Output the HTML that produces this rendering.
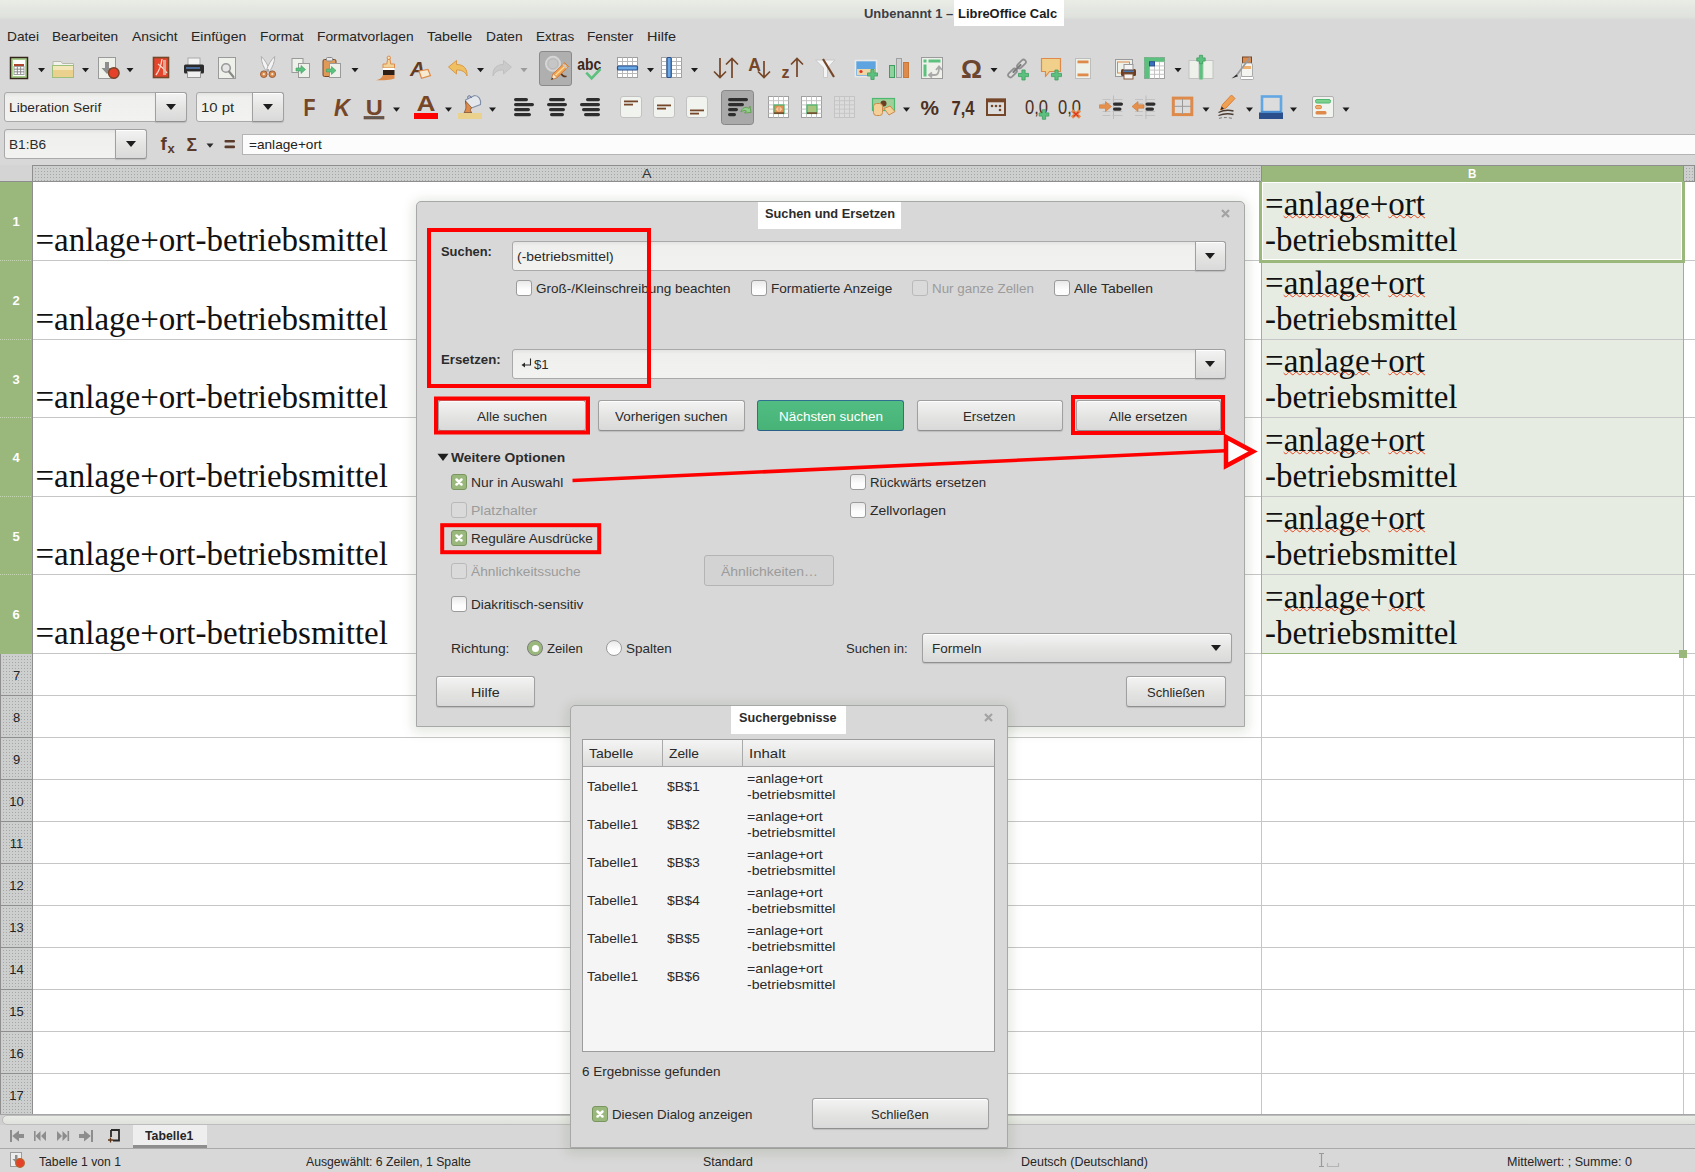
<!DOCTYPE html>
<html lang="de">
<head>
<meta charset="utf-8">
<title>Unbenannt 1 – LibreOffice Calc</title>
<style>
*{box-sizing:border-box;margin:0;padding:0}
html,body{width:1695px;height:1172px;overflow:hidden}
body{position:relative;background:#d8d8d8;font-family:"Liberation Sans",sans-serif;font-size:13.5px;color:#2b2b2b}
.abs{position:absolute}
.t{position:absolute;white-space:nowrap;line-height:16px}
.b{font-weight:bold}
/* title */
#title{left:0;top:0;width:1695px;height:21px;background:linear-gradient(#e9ede6 0,#dfe2dd 17px,#d8d8d8 20px)}
/* widgets */
.entry{position:absolute;background:linear-gradient(#e3e3e3,#eff0ed 4px,#f2f3f0);border:1px solid #a9a9a9;border-radius:3px}
.btn{position:absolute;background:linear-gradient(#f3f3f3,#e3e4e2 55%,#d9d9d9);border:1px solid #a0a0a0;border-bottom-color:#8f8f8f;border-radius:3px;box-shadow:0 1px 1px rgba(0,0,0,.13),inset 0 1px 0 rgba(255,255,255,.85);text-align:center;line-height:16px}
.btn span{position:absolute;left:0;right:0;text-align:center}
.cb{position:absolute;width:16px;height:16px;border:1px solid #9b9b9b;border-radius:3px;background:linear-gradient(#e9e9e9,#fdfdfd 60%)}
.cb.dis{background:#dadada;border-color:#b9b9b9}
.cb.on{background:#9ab87c;border-color:#7a9660}
.rb{position:absolute;width:16px;height:16px;border:1px solid #9b9b9b;border-radius:50%;background:linear-gradient(#e9e9e9,#fdfdfd 60%)}
.dis{color:#9a9a9a}
.arr{position:absolute;width:0;height:0;border-left:5px solid transparent;border-right:5px solid transparent;border-top:6px solid #1d1d1d}
.sarr{position:absolute;width:0;height:0;border-left:3.5px solid transparent;border-right:3.5px solid transparent;border-top:4px solid #2b2b2b}
/* sheet */
#sheet{left:0;top:165px;width:1695px;height:950px;background:#fff;overflow:hidden}
.hl{position:absolute;left:33px;width:1662px;height:1px;background:#c6c6c6}
.vl{position:absolute;top:16px;width:1px;height:934px;background:#c6c6c6}
.rh{position:absolute;left:0;width:32px;text-align:center;font-size:13px}
.rh.sel{background:#9ab87c;color:#fff;font-weight:bold}
.rh.un{background:#cdcfce radial-gradient(circle,#a6a6a6 .55px,transparent .9px) 1px 1px/3px 3px;border-bottom:1px solid #8e8e8e;border-left:1px solid #8e8e8e;color:#222}
.dots{background:#cdcfce radial-gradient(circle,#a6a6a6 .55px,transparent .9px) 1px 1px/3px 3px}
.cellA{position:absolute;left:35.5px;font-family:"Liberation Serif",serif;font-size:33px;line-height:36px;color:#111;white-space:nowrap}
.cellB{position:absolute;left:1265px;font-family:"Liberation Serif",serif;font-size:33px;line-height:36px;color:#111;white-space:nowrap}
.sq{text-decoration:underline wavy #e8421c 1.3px;text-underline-offset:-0.5px;text-decoration-skip-ink:none}
.dlg{position:absolute;background:#d8d8d8;border:1px solid #a8a8a8;border-radius:5px 5px 0 0;box-shadow:0 2px 12px 3px rgba(70,95,50,.15)}
</style>
</head>
<body>
<div id="title" class="abs" style="left:0px;top:0px;width:1695px;height:21px;"></div><div class="abs" style="left:954px;top:0px;width:110px;height:26px;background:#fff"></div><div class="t" style="left:864.2px;top:5.5px;font-size:13.4px;font-weight:bold;color:#3d3d45;transform:scaleX(0.9672);transform-origin:0 0;">Unbenannt 1 –</div><div class="t" style="left:958.1px;top:5.5px;font-size:13.4px;font-weight:bold;color:#1c1c1c;transform:scaleX(0.9653);transform-origin:0 0;">LibreOffice Calc</div>
<div class="t" style="left:6.6px;top:28.5px;font-size:13.6px;color:#252525;transform:scaleX(1.0079);transform-origin:0 0;">Datei</div><div class="t" style="left:51.8px;top:28.5px;font-size:13.6px;color:#252525;transform:scaleX(1.0063);transform-origin:0 0;">Bearbeiten</div><div class="t" style="left:131.5px;top:28.5px;font-size:13.6px;color:#252525;transform:scaleX(1.0224);transform-origin:0 0;">Ansicht</div><div class="t" style="left:190.6px;top:28.5px;font-size:13.6px;color:#252525;transform:scaleX(1.0281);transform-origin:0 0;">Einfügen</div><div class="t" style="left:259.9px;top:28.5px;font-size:13.6px;color:#252525;transform:scaleX(1.0146);transform-origin:0 0;">Format</div><div class="t" style="left:317.1px;top:28.5px;font-size:13.6px;color:#252525;transform:scaleX(1.0153);transform-origin:0 0;">Formatvorlagen</div><div class="t" style="left:427.4px;top:28.5px;font-size:13.6px;color:#252525;transform:scaleX(1.0487);transform-origin:0 0;">Tabelle</div><div class="t" style="left:485.6px;top:28.5px;font-size:13.6px;color:#252525;transform:scaleX(1.0085);transform-origin:0 0;">Daten</div><div class="t" style="left:535.6px;top:28.5px;font-size:13.6px;color:#252525;transform:scaleX(0.9911);transform-origin:0 0;">Extras</div><div class="t" style="left:587.4px;top:28.5px;font-size:13.6px;color:#252525;transform:scaleX(1.0020);transform-origin:0 0;">Fenster</div><div class="t" style="left:646.6px;top:28.5px;font-size:13.6px;color:#252525;transform:scaleX(1.0659);transform-origin:0 0;">Hilfe</div>
<svg class="abs" style="left:0;top:0" width="1695" height="130" viewBox="0 0 1695 130"><rect x="10.5" y="57.5" width="17" height="21" fill="#a8cf8c" stroke="#35241a" stroke-width="1.5"/><rect x="13" y="60" width="12" height="16" fill="#fff"/><rect x="14" y="64" width="10" height="2.5" fill="#b0452f"/><rect x="14" y="66.5" width="10" height="8" fill="#fff" stroke="#a0a0a0" stroke-width="1"/><line x1="17.333333333333332" y1="66.5" x2="17.333333333333332" y2="74.5" stroke="#8a8a8a" stroke-width="1" stroke-linecap="butt"/><line x1="20.666666666666668" y1="66.5" x2="20.666666666666668" y2="74.5" stroke="#8a8a8a" stroke-width="1" stroke-linecap="butt"/><line x1="14" y1="69.16666666666667" x2="24" y2="69.16666666666667" stroke="#8a8a8a" stroke-width="1" stroke-linecap="butt"/><line x1="14" y1="71.83333333333333" x2="24" y2="71.83333333333333" stroke="#8a8a8a" stroke-width="1" stroke-linecap="butt"/><path d="M38 68h7l-3.5 4.2z" fill="#1d1d1d" /><path d="M53 61.5h8l1.5 2h11v14h-20.5z" fill="#f2f2ee" stroke="#b9b9a9" stroke-width="1" /><rect x="52.5" y="65.5" width="21" height="12" fill="#ead28e" stroke="#9cbf7c" stroke-width="1"/><rect x="53" y="66" width="20" height="4" fill="#f3e6b8"/><path d="M82 68h7l-3.5 4.2z" fill="#1d1d1d" /><rect x="98.5" y="57.5" width="17" height="21" fill="#eef1ea" stroke="#9a9a9a" stroke-width="1"/><path d="M105 62h4v6h3.5l-5.5 6-5.5-6h3.5z" fill="#8d8d8d" /><circle cx="113.8" cy="73" r="5.3" fill="#e5402a" stroke="#754628" stroke-width="1.4"/><path d="M126.5 68h7l-3.5 4.2z" fill="#1d1d1d" /><rect x="153.5" y="57.5" width="15" height="20" fill="#e5452d" stroke="#754628" stroke-width="1.6"/><path d="M156 75c3-4 5-9 6-16M158 64c3 2 6 5 9 9" fill="none" stroke="#f5d9c8" stroke-width="1.3" /><rect x="163" y="60" width="3" height="15" fill="#d8c4b4" opacity="0.8"/><rect x="188" y="58" width="12" height="8" fill="#f4f4f4" stroke="#aaa" stroke-width="1"/><rect x="184" y="64.5" width="20" height="9" fill="#2b2b2b" rx="1.5"/><rect x="186" y="67" width="14" height="2" fill="#4a6a9a"/><rect x="187.5" y="71.5" width="13" height="6" fill="#f0f0f0" stroke="#9a9a9a" stroke-width="1"/><rect x="218.5" y="57.5" width="17" height="21" fill="#eef1ea" stroke="#9a9a9a" stroke-width="1"/><circle cx="226" cy="68" r="4.3" fill="#e6e6e6" stroke="#9a9a9a" stroke-width="1.6"/><line x1="229" y1="71.5" x2="233.5" y2="77" stroke="#8a8a8a" stroke-width="2.2" stroke-linecap="round"/><path d="M261.300 56.500C265 60 268 65 269.800 70.800L266.800 72C263.300 67 261.300 62 261.300 56.500Z" fill="#f4f4f4" stroke="#a2a2a2" stroke-width="0.8" /><path d="M274.700 56.500C271 60 268 65 266.200 70.800L269.200 72C272.700 67 274.700 62 274.700 56.500Z" fill="#f4f4f4" stroke="#a2a2a2" stroke-width="0.8" /><circle cx="263.8" cy="74.2" r="3.3" fill="#d98a4c" stroke="#9a5f38" stroke-width="1"/><circle cx="272.3" cy="74.2" r="3.3" fill="#d98a4c" stroke="#9a5f38" stroke-width="1"/><circle cx="263.8" cy="74.2" r="1.1" fill="#f0e4d8"/><circle cx="272.3" cy="74.2" r="1.1" fill="#f0e4d8"/><circle cx="268" cy="70" r="0.9" fill="#8a8a8a"/><rect x="292" y="58.5" width="11" height="14" fill="#eef1ea" stroke="#9a9a9a" stroke-width="1"/><rect x="298.5" y="63.5" width="11" height="14" fill="#eef1ea" stroke="#9a9a9a" stroke-width="1"/><path d="M296 68h5v-2.5l4.5 4-4.5 4v-2.5h-5z" fill="#5cc07e" stroke="#3f9e5f" stroke-width="0.6" /><rect x="323" y="59.5" width="13" height="17" fill="#e09a58" stroke="#754628" stroke-width="1" rx="1.5"/><rect x="326.5" y="57.5" width="6" height="3.5" fill="#e8e8e8" stroke="#8a8a8a" stroke-width="1" rx="1"/><rect x="329.5" y="63.5" width="11" height="14" fill="#eef1ea" stroke="#9a9a9a" stroke-width="1"/><path d="M326.5 69h5v-2.5l4.5 4-4.5 4v-2.5h-5z" fill="#5cc07e" stroke="#3f9e5f" stroke-width="0.6" /><path d="M351.5 68h7l-3.5 4.2z" fill="#1d1d1d" /><circle cx="388.8" cy="57.8" r="1.7" fill="#f4e4b8" stroke="#dd8a4a" stroke-width="1"/><path d="M387.500 59.500h2.600l.6 4.500h3.800v4h-11.500v-4h3.800z" fill="#f0d498" stroke="#dd8a4a" stroke-width="1" /><rect x="383" y="68" width="11.5" height="2" fill="#fff"/><rect x="383" y="70" width="11.5" height="5" fill="#2e1e16"/><path d="M383 75h11.500v3.500c-4 1.800-11 1.800-18.500 1.800 3.500-.8 6-2 7-5.300z" fill="#dd8a4a" /><text x="410" y="76" font-family="Liberation Sans, sans-serif" font-size="21" font-weight="bold" font-style="italic" fill="#643a22" text-anchor="start" >A</text><path d="M419 71l9-1.5 2.5 6-9 2.8z" fill="#f6ead0" stroke="#dd8a4a" stroke-width="1.2" /><path d="M448.5 67l8-6.5v4c7 0 11 4 10.5 11.5-1.8-4.5-5-6-10.5-6v4z" fill="#f0c060" stroke="#d89a48" stroke-width="1" /><path d="M477 68h7l-3.5 4.2z" fill="#1d1d1d" /><path d="M511.5 67l-8-6.5v4c-7 0-11 4-10.5 11.5 1.8-4.5 5-6 10.5-6v4z" fill="#cacaca" stroke="#c0c0c0" stroke-width="1" /><path d="M520.5 68h7l-3.5 4.2z" fill="#9c9c9c" /><rect x="539.5" y="51.5" width="32" height="34" fill="#afafaf" stroke="#8a8a8a" stroke-width="1" rx="2.5"/><circle cx="553" cy="63.8" r="7.2" fill="#c6c6c6" stroke="#d6d6d6" stroke-width="1.6"/><circle cx="553" cy="63.8" r="5" fill="none" stroke="#b4b4b4" stroke-width="0.8"/><path d="M561 73.500c1.500 2.500 3.500 3.500 5.500 2.800" fill="none" stroke="#5e3519" stroke-width="1.6" /><path d="M551.200 79.700l2-6 11.500-11 3.800 4-11.500 11z" fill="#f0a050" stroke="#c87030" stroke-width="0.8" /><path d="M555.500 75.200l10.500-10" fill="none" stroke="#f8dc98" stroke-width="1.4" /><path d="M563 64.200l3.800 4" fill="none" stroke="#c8c8c8" stroke-width="1.8" /><path d="M551.200 79.700l2-6 3.800 3.800z" fill="#f6e8c8" stroke="#c87030" stroke-width="0.5" /><path d="M551.200 79.700l.8-2.300 1.500 1.500z" fill="#2a2a2a" /><text x="577.3" y="69.8" font-family="Liberation Sans, sans-serif" font-size="16" font-weight="bold" font-style="normal" fill="#3a281e" text-anchor="start" textLength="24" lengthAdjust="spacingAndGlyphs">abc</text><path d="M586.300 72.600l5.300 5.700 8.800-9.300" fill="none" stroke="#5cc07e" stroke-width="2.6" /><rect x="617.5" y="57.5" width="20" height="20" fill="#fff" stroke="#a0a0a0" stroke-width="1"/><line x1="622.5" y1="57.5" x2="622.5" y2="77.5" stroke="#b9b9b9" stroke-width="1" stroke-linecap="butt"/><line x1="627.5" y1="57.5" x2="627.5" y2="77.5" stroke="#b9b9b9" stroke-width="1" stroke-linecap="butt"/><line x1="632.5" y1="57.5" x2="632.5" y2="77.5" stroke="#b9b9b9" stroke-width="1" stroke-linecap="butt"/><line x1="617.5" y1="61.5" x2="637.5" y2="61.5" stroke="#b9b9b9" stroke-width="1" stroke-linecap="butt"/><line x1="617.5" y1="65.5" x2="637.5" y2="65.5" stroke="#b9b9b9" stroke-width="1" stroke-linecap="butt"/><line x1="617.5" y1="69.5" x2="637.5" y2="69.5" stroke="#b9b9b9" stroke-width="1" stroke-linecap="butt"/><line x1="617.5" y1="73.5" x2="637.5" y2="73.5" stroke="#b9b9b9" stroke-width="1" stroke-linecap="butt"/><rect x="617.5" y="66" width="20" height="4" fill="#6aa8e6" stroke="#2b4f8c" stroke-width="1.2" rx="1"/><path d="M647 68h7l-3.5 4.2z" fill="#1d1d1d" /><rect x="661.5" y="57.5" width="20" height="20" fill="#fff" stroke="#a0a0a0" stroke-width="1"/><line x1="666.5" y1="57.5" x2="666.5" y2="77.5" stroke="#b9b9b9" stroke-width="1" stroke-linecap="butt"/><line x1="671.5" y1="57.5" x2="671.5" y2="77.5" stroke="#b9b9b9" stroke-width="1" stroke-linecap="butt"/><line x1="676.5" y1="57.5" x2="676.5" y2="77.5" stroke="#b9b9b9" stroke-width="1" stroke-linecap="butt"/><line x1="661.5" y1="61.5" x2="681.5" y2="61.5" stroke="#b9b9b9" stroke-width="1" stroke-linecap="butt"/><line x1="661.5" y1="65.5" x2="681.5" y2="65.5" stroke="#b9b9b9" stroke-width="1" stroke-linecap="butt"/><line x1="661.5" y1="69.5" x2="681.5" y2="69.5" stroke="#b9b9b9" stroke-width="1" stroke-linecap="butt"/><line x1="661.5" y1="73.5" x2="681.5" y2="73.5" stroke="#b9b9b9" stroke-width="1" stroke-linecap="butt"/><rect x="667" y="57.5" width="4.2" height="20" fill="#6aa8e6" stroke="#2b4f8c" stroke-width="1.2" rx="1"/><path d="M691 68h7l-3.5 4.2z" fill="#1d1d1d" /><path d="M720 58v19M714 71.5l6 6 6-6M732 78v-19M726 64.5l6-6 6 6" fill="none" stroke="#754628" stroke-width="1.7" /><text x="748.3" y="71" font-family="Liberation Sans, sans-serif" font-size="17.5" font-weight="bold" font-style="normal" fill="#754628" text-anchor="start" >A</text><path d="M764 61v16M758 71.5l6 6 6-6" fill="none" stroke="#754628" stroke-width="1.7" /><text x="781.5" y="77.5" font-family="Liberation Sans, sans-serif" font-size="16" font-weight="bold" font-style="normal" fill="#754628" text-anchor="start" >z</text><path d="M797 77v-18M791 64.5l6-6 6 6" fill="none" stroke="#754628" stroke-width="1.7" /><path d="M815.5 60h19.5l-7.5 8v9.5h-4v-9.5z" fill="#f4f4f4" stroke="#c9c9c9" stroke-width="1" /><line x1="823" y1="59" x2="834" y2="77" stroke="#754628" stroke-width="2.2" stroke-linecap="butt"/><rect x="855.5" y="60.5" width="21" height="16" fill="#5ea4e0" stroke="#e9e9e9" stroke-width="1.6"/><rect x="857" y="69" width="18" height="6" fill="#ecd6a8"/><circle cx="861" cy="71.5" r="1.6" fill="#e03020"/><path d="M870.9 69.5h3.2v3.4h3.4v3.2h-3.4v3.4h-3.2v-3.4h-3.4v-3.2h3.4z" fill="#5cc07e" stroke="#3f9e5f" stroke-width="0.8" /><rect x="889.5" y="65.5" width="5" height="12" fill="#8fd29c" stroke="#3f9e5f" stroke-width="1"/><rect x="896.5" y="58.5" width="5" height="19" fill="#cfcfcf" stroke="#a0a0a0" stroke-width="1"/><rect x="903.5" y="62.5" width="5" height="15" fill="#dd8a4a" stroke="#c87838" stroke-width="1"/><rect x="921.5" y="57.5" width="21" height="21" fill="#eef1ea" stroke="#9a9a9a" stroke-width="1"/><rect x="923.5" y="59.5" width="3" height="3" fill="#5cc07e"/><rect x="928.5" y="59.5" width="12" height="3" fill="#5cc07e"/><rect x="923.5" y="64.5" width="3" height="12" fill="#5cc07e"/><path d="M929 75h6c3 0 4-2 4-7m-3 2l3-3.5 3 3.5M932 72.5l-3 2.5 3 2.5" fill="none" stroke="#a9a9a9" stroke-width="1.8" /><text x="961" y="78" font-family="Liberation Sans, sans-serif" font-size="25" font-weight="bold" font-style="normal" fill="#6b4630" text-anchor="start" textLength="21" lengthAdjust="spacingAndGlyphs">Ω</text><path d="M990.5 68h7l-3.5 4.2z" fill="#1d1d1d" /><path d="M1010.500 75l4-4M1019.500 66l4-4" fill="none" stroke="#8f8f8f" stroke-width="6.5" stroke-linecap="round"/><path d="M1010.500 75l4-4M1019.500 66l4-4" fill="none" stroke="#dedede" stroke-width="3" stroke-linecap="round"/><line x1="1013.5" y1="72" x2="1020.5" y2="65" stroke="#7d7d7d" stroke-width="2.2" stroke-linecap="round"/><path d="M1021.9 70h3.2v3.4h3.4v3.2h-3.4v3.4h-3.2v-3.4h-3.4v-3.2h3.4z" fill="#5cc07e" stroke="#3f9e5f" stroke-width="0.8" /><path d="M1041.5 58.5h19v13h-11l-4 5v-5h-4z" fill="#f0d08a" stroke="#dd8a4a" stroke-width="1.2" stroke-linejoin="round"/><path d="M1054.9 70h3.2v3.4h3.4v3.2h-3.4v3.4h-3.2v-3.4h-3.4v-3.2h3.4z" fill="#5cc07e" stroke="#3f9e5f" stroke-width="0.8" /><rect x="1075.5" y="58.5" width="15" height="20" fill="#eef1ea" stroke="#bdbdbd" stroke-width="1"/><rect x="1077.5" y="60.5" width="11" height="2.8" fill="#dd8a4a"/><rect x="1077.5" y="73.5" width="11" height="2.8" fill="#dd8a4a"/><rect x="1115.5" y="59.5" width="17" height="17" fill="#eef1ea" stroke="#9a9a9a" stroke-width="1"/><rect x="1117.5" y="62" width="12" height="11" fill="none" stroke="#dd8a4a" stroke-width="1"/><rect x="1121" y="69" width="15" height="7" fill="#6b3f24" rx="1.5"/><rect x="1124" y="64.5" width="9" height="5" fill="#f4f4f4" stroke="#999" stroke-width="1"/><rect x="1124" y="74" width="9" height="5" fill="#f4f4f4" stroke="#8a5a3a" stroke-width="1"/><rect x="1123" y="70.5" width="11" height="1.6" fill="#4a78b0"/><rect x="1144.5" y="57.5" width="20" height="21" fill="#fff" stroke="#a0a0a0" stroke-width="1"/><line x1="1149.5" y1="57.5" x2="1149.5" y2="78.5" stroke="#c4c4c4" stroke-width="1" stroke-linecap="butt"/><line x1="1154.5" y1="57.5" x2="1154.5" y2="78.5" stroke="#c4c4c4" stroke-width="1" stroke-linecap="butt"/><line x1="1159.5" y1="57.5" x2="1159.5" y2="78.5" stroke="#c4c4c4" stroke-width="1" stroke-linecap="butt"/><line x1="1144.5" y1="61.7" x2="1164.5" y2="61.7" stroke="#c4c4c4" stroke-width="1" stroke-linecap="butt"/><line x1="1144.5" y1="65.9" x2="1164.5" y2="65.9" stroke="#c4c4c4" stroke-width="1" stroke-linecap="butt"/><line x1="1144.5" y1="70.1" x2="1164.5" y2="70.1" stroke="#c4c4c4" stroke-width="1" stroke-linecap="butt"/><line x1="1144.5" y1="74.3" x2="1164.5" y2="74.3" stroke="#c4c4c4" stroke-width="1" stroke-linecap="butt"/><rect x="1144.5" y="57.5" width="20" height="4.2" fill="#5cc07e"/><rect x="1144.5" y="57.5" width="5" height="21" fill="#5cc07e"/><rect x="1149.5" y="61.7" width="5" height="4.2" fill="#3b6fc0" stroke="#2b4f8c" stroke-width="1"/><path d="M1174.5 68h7l-3.5 4.2z" fill="#1d1d1d" /><rect x="1189" y="60.5" width="10" height="18" fill="#eef1ea" stroke="#c2c2c2" stroke-width="1"/><rect x="1203" y="60.5" width="10" height="18" fill="#eef1ea" stroke="#c2c2c2" stroke-width="1"/><rect x="1199.3" y="61" width="3.4" height="18.5" fill="#5cc07e"/><path d="M1199.4 55.3h3.2v2.6h2.6v3.2h-2.6v2.6h-3.2v-2.6h-2.6v-3.2h2.6z" fill="#5cc07e" stroke="#3f9e5f" stroke-width="0.8" /><rect x="1242.5" y="57" width="9" height="6" fill="#dd8a4a" stroke="#754628" stroke-width="1"/><rect x="1241.5" y="63" width="11" height="14" fill="#f4f4f0" stroke="#aaa" stroke-width="1" rx="2"/><rect x="1243" y="66" width="8" height="3" fill="#f0b070"/><rect x="1240.5" y="76.5" width="13" height="3" fill="#fff" stroke="#aaa" stroke-width="1" rx="1"/><line x1="1250" y1="57.5" x2="1236" y2="76" stroke="#9a9a9a" stroke-width="1.8" stroke-linecap="butt"/><path d="M1231.5 78.5l5-4 1.5 1.8z" fill="#2a2a2a" /><text x="303.5" y="116" font-family="Liberation Sans, sans-serif" font-size="24" font-weight="bold" font-style="normal" fill="#754628" text-anchor="start" textLength="12" lengthAdjust="spacingAndGlyphs">F</text><text x="334" y="116" font-family="Liberation Sans, sans-serif" font-size="24" font-weight="bold" font-style="italic" fill="#754628" text-anchor="start" textLength="16" lengthAdjust="spacingAndGlyphs">K</text><text x="365.8" y="114.5" font-family="Liberation Sans, sans-serif" font-size="22.8" font-weight="bold" font-style="normal" fill="#754628" text-anchor="start" textLength="17" lengthAdjust="spacingAndGlyphs">U</text><rect x="364" y="116.3" width="20" height="2.7" fill="#5a5a5a" stroke="#754628" stroke-width="0.6"/><path d="M393 107.5h7l-3.5 4.2z" fill="#1d1d1d" /><text x="416.5" y="111.3" font-family="Liberation Sans, sans-serif" font-size="22.5" font-weight="bold" font-style="normal" fill="#754628" text-anchor="start" textLength="19" lengthAdjust="spacingAndGlyphs">A</text><rect x="414" y="113" width="24" height="6" fill="#f00"/><path d="M445 107.5h7l-3.5 4.2z" fill="#1d1d1d" /><rect x="458" y="113" width="24" height="6" fill="#ead28e"/><path d="M465.5 100l9-4.5c4 0 7 4 6 9l-9 3.5c-4-1-6.5-4-6-8z" fill="#e4e8ec" stroke="#7f8fa8" stroke-width="1.1" /><path d="M465.5 101c.5 5 1 8-1.500 11.5h8c-2.5-1.500-1.500-3 -.5-5z" fill="#dd8a4a" stroke="#754628" stroke-width="0.7" /><path d="M468 98.500c-1.500-3 2.500-4 3.500-.5" fill="none" stroke="#5f6f98" stroke-width="1" /><path d="M489 107.5h7l-3.5 4.2z" fill="#1d1d1d" /><rect x="514" y="98" width="14" height="3.2" fill="#2d2d2d" rx="1.6"/><rect x="514" y="103" width="20" height="3.2" fill="#2d2d2d" rx="1.6"/><rect x="514" y="108" width="16" height="3.2" fill="#2d2d2d" rx="1.6"/><rect x="514" y="113" width="17" height="3.2" fill="#2d2d2d" rx="1.6"/><rect x="549" y="98" width="16" height="3.2" fill="#2d2d2d" rx="1.6"/><rect x="547" y="103" width="20" height="3.2" fill="#2d2d2d" rx="1.6"/><rect x="549" y="108" width="16" height="3.2" fill="#2d2d2d" rx="1.6"/><rect x="550" y="113" width="14" height="3.2" fill="#2d2d2d" rx="1.6"/><rect x="586" y="98" width="14" height="3.2" fill="#2d2d2d" rx="1.6"/><rect x="580" y="103" width="20" height="3.2" fill="#2d2d2d" rx="1.6"/><rect x="582" y="108" width="18" height="3.2" fill="#2d2d2d" rx="1.6"/><rect x="584" y="113" width="16" height="3.2" fill="#2d2d2d" rx="1.6"/><rect x="620.5" y="96.5" width="21" height="21" fill="#f1f3ee" stroke="#c2c2c2" stroke-width="1" rx="2.5"/><rect x="624.0" y="100.5" width="14" height="1.8" fill="#754628"/><rect x="624.0" y="103.7" width="9" height="1.8" fill="#754628"/><rect x="653.5" y="96.5" width="21" height="21" fill="#f1f3ee" stroke="#c2c2c2" stroke-width="1" rx="2.5"/><rect x="657.0" y="104.5" width="14" height="1.8" fill="#754628"/><rect x="657.0" y="107.7" width="9" height="1.8" fill="#754628"/><rect x="686.5" y="96.5" width="21" height="21" fill="#f1f3ee" stroke="#c2c2c2" stroke-width="1" rx="2.5"/><rect x="690.0" y="109.5" width="14" height="1.8" fill="#754628"/><rect x="690.0" y="112.7" width="9" height="1.8" fill="#754628"/><rect x="721.5" y="90.5" width="32" height="34" fill="#a9a9a9" stroke="#878787" stroke-width="1" rx="3"/><rect x="728" y="98" width="20" height="3.2" fill="#2d2d2d" rx="1.6"/><rect x="728" y="103" width="16" height="3.2" fill="#2d2d2d" rx="1.6"/><rect x="728" y="108" width="10" height="3.2" fill="#2d2d2d" rx="1.6"/><rect x="728" y="113" width="8" height="3.2" fill="#2d2d2d" rx="1.6"/><path d="M741 111c2-4 6-4.500 8-2.500l1-2.500 1 6.500-6.500.5 2-2c-1.500-1-3.500-.5-5.500 1z" fill="#8fce8a" stroke="#5a9a48" stroke-width="0.8" /><rect x="768.5" y="96.5" width="20" height="21" fill="#fff" stroke="#a0a0a0" stroke-width="1"/><line x1="773.5" y1="96.5" x2="773.5" y2="117.5" stroke="#c4c4c4" stroke-width="1" stroke-linecap="butt"/><line x1="778.5" y1="96.5" x2="778.5" y2="117.5" stroke="#c4c4c4" stroke-width="1" stroke-linecap="butt"/><line x1="783.5" y1="96.5" x2="783.5" y2="117.5" stroke="#c4c4c4" stroke-width="1" stroke-linecap="butt"/><line x1="768.5" y1="100.7" x2="788.5" y2="100.7" stroke="#c4c4c4" stroke-width="1" stroke-linecap="butt"/><line x1="768.5" y1="104.9" x2="788.5" y2="104.9" stroke="#c4c4c4" stroke-width="1" stroke-linecap="butt"/><line x1="768.5" y1="109.1" x2="788.5" y2="109.1" stroke="#c4c4c4" stroke-width="1" stroke-linecap="butt"/><line x1="768.5" y1="113.3" x2="788.5" y2="113.3" stroke="#c4c4c4" stroke-width="1" stroke-linecap="butt"/><rect x="774" y="105" width="10" height="8.5" fill="#e09050" stroke="#49b46e" stroke-width="1.2"/><path d="M775.5 109.300l3-3v6zM782.500 109.300l-3-3v6z" fill="#f4c8a0" /><rect x="774" y="112.3" width="10" height="1.6" fill="#754628"/><rect x="801.5" y="96.5" width="20" height="21" fill="#fff" stroke="#a0a0a0" stroke-width="1"/><line x1="806.5" y1="96.5" x2="806.5" y2="117.5" stroke="#c4c4c4" stroke-width="1" stroke-linecap="butt"/><line x1="811.5" y1="96.5" x2="811.5" y2="117.5" stroke="#c4c4c4" stroke-width="1" stroke-linecap="butt"/><line x1="816.5" y1="96.5" x2="816.5" y2="117.5" stroke="#c4c4c4" stroke-width="1" stroke-linecap="butt"/><line x1="801.5" y1="100.7" x2="821.5" y2="100.7" stroke="#c4c4c4" stroke-width="1" stroke-linecap="butt"/><line x1="801.5" y1="104.9" x2="821.5" y2="104.9" stroke="#c4c4c4" stroke-width="1" stroke-linecap="butt"/><line x1="801.5" y1="109.1" x2="821.5" y2="109.1" stroke="#c4c4c4" stroke-width="1" stroke-linecap="butt"/><line x1="801.5" y1="113.3" x2="821.5" y2="113.3" stroke="#c4c4c4" stroke-width="1" stroke-linecap="butt"/><rect x="807" y="105" width="10" height="8.5" fill="#a9c47c" stroke="#49b46e" stroke-width="1.2"/><rect x="807" y="112.3" width="10" height="1.6" fill="#754628"/><rect x="834.5" y="96.5" width="20" height="21" fill="#dcdcdc" stroke="#c4c4c4" stroke-width="1"/><line x1="839.5" y1="96.5" x2="839.5" y2="117.5" stroke="#c6c6c6" stroke-width="1" stroke-linecap="butt"/><line x1="844.5" y1="96.5" x2="844.5" y2="117.5" stroke="#c6c6c6" stroke-width="1" stroke-linecap="butt"/><line x1="849.5" y1="96.5" x2="849.5" y2="117.5" stroke="#c6c6c6" stroke-width="1" stroke-linecap="butt"/><line x1="834.5" y1="100.7" x2="854.5" y2="100.7" stroke="#c6c6c6" stroke-width="1" stroke-linecap="butt"/><line x1="834.5" y1="104.9" x2="854.5" y2="104.9" stroke="#c6c6c6" stroke-width="1" stroke-linecap="butt"/><line x1="834.5" y1="109.1" x2="854.5" y2="109.1" stroke="#c6c6c6" stroke-width="1" stroke-linecap="butt"/><line x1="834.5" y1="113.3" x2="854.5" y2="113.3" stroke="#c6c6c6" stroke-width="1" stroke-linecap="butt"/><rect x="872.5" y="98.5" width="22" height="12" fill="#9fd09a" stroke="#4cb870" stroke-width="1.2"/><circle cx="883.5" cy="103.5" r="3" fill="#6b3f24"/><rect x="873.5" y="103.5" width="9" height="12" fill="#f4cf98" stroke="#c98a4a" stroke-width="1" rx="3"/><path d="M884 108.500l6-2.500 5 5.500-6 3.500z" fill="#f4cf98" stroke="#c98a4a" stroke-width="1" /><path d="M903 107.5h7l-3.5 4.2z" fill="#1d1d1d" /><text x="920.5" y="114.5" font-family="Liberation Sans, sans-serif" font-size="21" font-weight="bold" font-style="normal" fill="#4b3022" text-anchor="start" textLength="18.5" lengthAdjust="spacingAndGlyphs">%</text><text x="951.5" y="114.5" font-family="Liberation Sans, sans-serif" font-size="19.5" font-weight="bold" font-style="normal" fill="#4b3022" text-anchor="start" textLength="23" lengthAdjust="spacingAndGlyphs">7,4</text><rect x="987" y="99.5" width="18" height="15.5" fill="#dedede" stroke="#754628" stroke-width="2"/><rect x="986" y="98.7" width="20" height="3.6" fill="#754628"/><circle cx="992" cy="106" r="1.3" fill="#754628"/><circle cx="996" cy="106" r="1.3" fill="#754628"/><circle cx="1000" cy="106" r="1.3" fill="#754628"/><circle cx="1000" cy="110" r="1.3" fill="#754628"/><text x="1025" y="113.5" font-family="Liberation Sans, sans-serif" font-size="21" font-weight="normal" font-style="normal" fill="#4b3022" text-anchor="start" textLength="23" lengthAdjust="spacingAndGlyphs">0,0</text><path d="M1042.4 109.7h3.2v3.1999999999999997h3.1999999999999997v3.2h-3.1999999999999997v3.1999999999999997h-3.2v-3.1999999999999997h-3.1999999999999997v-3.2h3.1999999999999997z" fill="#5cc07e" stroke="#3f9e5f" stroke-width="0.8" /><text x="1058" y="113.5" font-family="Liberation Sans, sans-serif" font-size="21" font-weight="normal" font-style="normal" fill="#4b3022" text-anchor="start" textLength="23" lengthAdjust="spacingAndGlyphs">0,0</text><path d="M1072 110.500l8 7M1080 110.500l-8 7" fill="none" stroke="#e08a4a" stroke-width="3.2" /><path d="M1073.500 112l5 4.500M1078.500 112l-5 4.500" fill="none" stroke="#e03020" stroke-width="1.1" /><line x1="1102.5" y1="99.5" x2="1110.5" y2="99.5" stroke="#c2c2c2" stroke-width="1" stroke-linecap="butt"/><line x1="1112.5" y1="99.5" x2="1122.5" y2="99.5" stroke="#c2c2c2" stroke-width="1" stroke-linecap="butt"/><line x1="1102.5" y1="103.5" x2="1110.5" y2="103.5" stroke="#c2c2c2" stroke-width="1" stroke-linecap="butt"/><line x1="1112.5" y1="103.5" x2="1122.5" y2="103.5" stroke="#c2c2c2" stroke-width="1" stroke-linecap="butt"/><line x1="1102.5" y1="111.5" x2="1110.5" y2="111.5" stroke="#c2c2c2" stroke-width="1" stroke-linecap="butt"/><line x1="1112.5" y1="111.5" x2="1122.5" y2="111.5" stroke="#c2c2c2" stroke-width="1" stroke-linecap="butt"/><line x1="1102.5" y1="115.5" x2="1110.5" y2="115.5" stroke="#c2c2c2" stroke-width="1" stroke-linecap="butt"/><line x1="1112.5" y1="115.5" x2="1122.5" y2="115.5" stroke="#c2c2c2" stroke-width="1" stroke-linecap="butt"/><line x1="1113.5" y1="95.5" x2="1113.5" y2="119" stroke="#bdbdbd" stroke-width="1" stroke-linecap="butt"/><rect x="1113.0" y="102.5" width="10" height="3.2" fill="#2d2d2d" rx="1.6"/><rect x="1113.0" y="107.5" width="8.5" height="3.2" fill="#2d2d2d" rx="1.6"/><path d="M1099.5 104.800h6v-3.300l6 5-6 5v-3.300h-6z" fill="#e6904c" stroke="#c87838" stroke-width="0.6" /><line x1="1135" y1="99.5" x2="1143" y2="99.5" stroke="#c2c2c2" stroke-width="1" stroke-linecap="butt"/><line x1="1145" y1="99.5" x2="1155" y2="99.5" stroke="#c2c2c2" stroke-width="1" stroke-linecap="butt"/><line x1="1135" y1="103.5" x2="1143" y2="103.5" stroke="#c2c2c2" stroke-width="1" stroke-linecap="butt"/><line x1="1145" y1="103.5" x2="1155" y2="103.5" stroke="#c2c2c2" stroke-width="1" stroke-linecap="butt"/><line x1="1135" y1="111.5" x2="1143" y2="111.5" stroke="#c2c2c2" stroke-width="1" stroke-linecap="butt"/><line x1="1145" y1="111.5" x2="1155" y2="111.5" stroke="#c2c2c2" stroke-width="1" stroke-linecap="butt"/><line x1="1135" y1="115.5" x2="1143" y2="115.5" stroke="#c2c2c2" stroke-width="1" stroke-linecap="butt"/><line x1="1145" y1="115.5" x2="1155" y2="115.5" stroke="#c2c2c2" stroke-width="1" stroke-linecap="butt"/><line x1="1146" y1="95.5" x2="1146" y2="119" stroke="#bdbdbd" stroke-width="1" stroke-linecap="butt"/><rect x="1145.5" y="102.5" width="10" height="3.2" fill="#2d2d2d" rx="1.6"/><rect x="1145.5" y="107.5" width="8.5" height="3.2" fill="#2d2d2d" rx="1.6"/><path d="M1144 104.800h-6v-3.300l-6 5 6 5v-3.300h6z" fill="#e6904c" stroke="#c87838" stroke-width="0.6" /><rect x="1173.3" y="98.1" width="18.5" height="16.5" fill="#dcdcdc" stroke="#dd8a4a" stroke-width="3"/><line x1="1182.5" y1="99" x2="1182.5" y2="114" stroke="#9a9a9a" stroke-width="1" stroke-linecap="butt"/><line x1="1174" y1="106.3" x2="1191" y2="106.3" stroke="#9a9a9a" stroke-width="1" stroke-linecap="butt"/><path d="M1202.5 107.5h7l-3.5 4.2z" fill="#1d1d1d" /><path d="M1220.500 110l2-5.500 9-9.500 3.500 3.500-9 9.500z" fill="#f0a050" stroke="#d8803a" stroke-width="1" /><path d="M1220.500 110l1.200-3.500 2.300 2.300z" fill="#2a2a2a" /><path d="M1218.500 112.500c5-2.500 9-3 15-1.500M1218.500 115.500c5-2 9-2.500 15-1" fill="none" stroke="#4a3a30" stroke-width="1.3" /><path d="M1219 118.300c4-1 8-1 13 0" fill="none" stroke="#7a7a7a" stroke-width="1" stroke-dasharray="3 2"/><path d="M1246 107.5h7l-3.5 4.2z" fill="#1d1d1d" /><rect x="1262" y="96.5" width="19" height="16" fill="#dcdcdc" stroke="#62a6e4" stroke-width="2.6"/><rect x="1259" y="112.5" width="24" height="6.5" fill="#2b4f8c"/><rect x="1261" y="110.8" width="20" height="2" fill="#4a8fd4"/><path d="M1290 107.5h7l-3.5 4.2z" fill="#1d1d1d" /><rect x="1312.5" y="96.5" width="21" height="21" fill="#f1f3ee" stroke="#b0b0b0" stroke-width="1" rx="1.5"/><rect x="1315.5" y="99.5" width="15" height="3.5" fill="#7ed08e" stroke="#4cb870" stroke-width="1" rx="1.5"/><rect x="1315.5" y="105.5" width="6" height="3.2" fill="#f0b070" stroke="#dd8a4a" stroke-width="1" rx="1.5"/><rect x="1315.5" y="111" width="11" height="3.5" fill="#dd8a4a" rx="1.5"/><path d="M1342.5 107.5h7l-3.5 4.2z" fill="#1d1d1d" /></svg><div class="entry" style="left:4px;top:92px;width:152px;height:30px;border-radius:3px 0 0 3px"></div><div class="btn" style="left:155px;top:92px;width:32px;height:30px;border-radius:0 3px 3px 0"></div><div class="arr" style="left:166.0px;top:104.0px"></div><div class="t" style="left:8.6px;top:99.5px;font-size:13.4px;color:#2a2a2a;transform:scaleX(1.0240);transform-origin:0 0;">Liberation Serif</div><div class="entry" style="left:196px;top:92px;width:57px;height:30px;border-radius:3px 0 0 3px"></div><div class="btn" style="left:252px;top:92px;width:32px;height:30px;border-radius:0 3px 3px 0"></div><div class="arr" style="left:263.0px;top:104.0px"></div><div class="t" style="left:200.6px;top:99.5px;font-size:13.4px;color:#2a2a2a;transform:scaleX(1.1140);transform-origin:0 0;">10 pt</div>
<div class="entry" style="left:4px;top:129px;width:112px;height:30px;border-radius:3px 0 0 3px"></div><div class="btn" style="left:115px;top:129px;width:32px;height:30px;border-radius:0 3px 3px 0"></div><div class="arr" style="left:126.0px;top:141.0px"></div><div class="t" style="left:8.6px;top:136.5px;font-size:13.4px;color:#2a2a2a;transform:scaleX(1.0163);transform-origin:0 0;">B1:B6</div><div class="entry" style="left:242px;top:134px;width:1460px;height:21px;border-radius:0;background:#fcfcfc;border-color:#b4b4b4"></div><div class="t" style="left:248.8px;top:136.5px;font-size:13.4px;color:#222;transform:scaleX(1.0178);transform-origin:0 0;">=anlage+ort</div><svg class="abs" style="left:155px;top:130px" width="90" height="28" viewBox="155 130 90 28"><text x="160.5" y="150" font-family="Liberation Sans, sans-serif" font-size="19" font-weight="bold" font-style="normal" fill="#5a3a2a" text-anchor="start" >f</text><text x="167.5" y="152.5" font-family="Liberation Sans, sans-serif" font-size="13" font-weight="bold" font-style="normal" fill="#5a3a2a" text-anchor="start" >x</text><text x="186.5" y="150.5" font-family="Liberation Sans, sans-serif" font-size="17.5" font-weight="bold" font-style="normal" fill="#5a3a2a" text-anchor="start" >Σ</text><path d="M206.5 143.5h7l-3.5 4.2z" fill="#2b2b2b" /><rect x="224.5" y="140" width="10.5" height="2.6" fill="#5a3a2a" rx="1"/><rect x="224.5" y="145.6" width="10.5" height="2.6" fill="#5a3a2a" rx="1"/></svg>
<div id="sheet" class="abs"><div class="abs" style="left:0;top:0;width:1695px;height:17px;background:#d4d4d4"></div><div class="abs dots" style="left:32px;top:0;width:1230px;height:17px;border:1px solid #8e8e8e;border-top-color:#a2a2a2"  ></div><div class="t" style="left:642.1px;top:1.0px;font-size:12.5px;color:#333;transform:scaleX(1.1394);transform-origin:0 0;">A</div><div class="abs" style="left:1262px;top:0;width:421px;height:17px;background:#9ab87c"></div><div class="t" style="left:1467.9px;top:1.0px;font-size:12.5px;font-weight:bold;color:#fff;transform:scaleX(0.9305);transform-origin:0 0;">B</div><div class="abs dots" style="left:1683px;top:0;width:12px;height:17px;border:1px solid #8e8e8e"></div><div class="abs" style="left:32px;top:0;width:1663px;height:1px;background:#8e8e8e"></div><div class="abs" style="left:0;top:16px;width:1695px;height:1px;background:#8e8e8e"></div><div class="abs" style="left:1262px;top:17px;width:421px;height:472px;background:#e7ece2"></div><div class="hl" style="top:95px"></div><div class="hl" style="top:174px"></div><div class="hl" style="top:252px"></div><div class="hl" style="top:331px"></div><div class="hl" style="top:409px"></div><div class="hl" style="top:488px"></div><div class="hl" style="top:530px"></div><div class="hl" style="top:572px"></div><div class="hl" style="top:614px"></div><div class="hl" style="top:656px"></div><div class="hl" style="top:698px"></div><div class="hl" style="top:740px"></div><div class="hl" style="top:782px"></div><div class="hl" style="top:824px"></div><div class="hl" style="top:866px"></div><div class="hl" style="top:908px"></div><div class="hl" style="top:950px"></div><div class="abs" style="left:32px;top:17px;width:1px;height:933px;background:#8e8e8e"></div><div class="vl" style="left:1261px"></div><div class="vl" style="left:1683px"></div><div class="rh sel" style="top:17px;height:79px;line-height:80px">1</div><div class="rh sel" style="top:96px;height:79px;line-height:80px">2</div><div class="rh sel" style="top:175px;height:78px;line-height:79px">3</div><div class="rh sel" style="top:253px;height:79px;line-height:80px">4</div><div class="rh sel" style="top:332px;height:78px;line-height:79px">5</div><div class="rh sel" style="top:410px;height:79px;line-height:80px">6</div><div class="rh un" style="top:489px;height:42px;line-height:43px">7</div><div class="rh un" style="top:531px;height:42px;line-height:43px">8</div><div class="rh un" style="top:573px;height:42px;line-height:43px">9</div><div class="rh un" style="top:615px;height:42px;line-height:43px">10</div><div class="rh un" style="top:657px;height:42px;line-height:43px">11</div><div class="rh un" style="top:699px;height:42px;line-height:43px">12</div><div class="rh un" style="top:741px;height:42px;line-height:43px">13</div><div class="rh un" style="top:783px;height:42px;line-height:43px">14</div><div class="rh un" style="top:825px;height:42px;line-height:43px">15</div><div class="rh un" style="top:867px;height:42px;line-height:43px">16</div><div class="rh un" style="top:909px;height:42px;line-height:43px">17</div><div class="abs" style="left:0;top:95px;width:32px;height:1px;background:repeating-linear-gradient(90deg,#c3d4b2 0 1px,#9ab87c 1px 2px)"></div><div class="abs" style="left:0;top:174px;width:32px;height:1px;background:repeating-linear-gradient(90deg,#c3d4b2 0 1px,#9ab87c 1px 2px)"></div><div class="abs" style="left:0;top:252px;width:32px;height:1px;background:repeating-linear-gradient(90deg,#c3d4b2 0 1px,#9ab87c 1px 2px)"></div><div class="abs" style="left:0;top:331px;width:32px;height:1px;background:repeating-linear-gradient(90deg,#c3d4b2 0 1px,#9ab87c 1px 2px)"></div><div class="abs" style="left:0;top:409px;width:32px;height:1px;background:repeating-linear-gradient(90deg,#c3d4b2 0 1px,#9ab87c 1px 2px)"></div><div class="cellA" style="top:57px">=anlage+ort-betriebsmittel</div><div class="cellB" style="top:21.400000000000006px">=<span class="sq">anlage</span>+<span class="sq">ort</span><br>-betriebsmittel</div><div class="cellA" style="top:136px">=anlage+ort-betriebsmittel</div><div class="cellB" style="top:100.4px">=<span class="sq">anlage</span>+<span class="sq">ort</span><br>-betriebsmittel</div><div class="cellA" style="top:214px">=anlage+ort-betriebsmittel</div><div class="cellB" style="top:178.4px">=<span class="sq">anlage</span>+<span class="sq">ort</span><br>-betriebsmittel</div><div class="cellA" style="top:293px">=anlage+ort-betriebsmittel</div><div class="cellB" style="top:257.4px">=<span class="sq">anlage</span>+<span class="sq">ort</span><br>-betriebsmittel</div><div class="cellA" style="top:371px">=anlage+ort-betriebsmittel</div><div class="cellB" style="top:335.4px">=<span class="sq">anlage</span>+<span class="sq">ort</span><br>-betriebsmittel</div><div class="cellA" style="top:450px">=anlage+ort-betriebsmittel</div><div class="cellB" style="top:414.4px">=<span class="sq">anlage</span>+<span class="sq">ort</span><br>-betriebsmittel</div><div class="abs" style="left:1261px;top:16px;width:423px;height:473px;border:1px solid #9ab87c"></div><div class="abs" style="left:1259px;top:17px;width:426px;height:81px;border:3px solid #9ab87c;border-top:none;box-shadow:inset 0 0 0 1px #fff"></div><div class="abs" style="left:1679px;top:485px;width:8px;height:8px;background:#9ab87c"></div></div>
<div class="abs" style="left:0px;top:1114px;width:1695px;height:1px;background:#a6a6a6"></div><div class="abs" style="left:0px;top:1115px;width:1695px;height:10px;background:#cfcfcf"></div><div class="abs" style="left:2px;top:1115px;width:1700px;height:10px;background:linear-gradient(#e9ece6,#dfe2dc);border:1px solid #bcbcbc;border-radius:5px"></div><div class="abs" style="left:0px;top:1125px;width:1695px;height:23px;background:#d7d7d7"></div><div class="abs" style="left:133px;top:1125px;width:74px;height:23px;background:#eeeeee;border-bottom:3px solid #8e8e8e"></div><div class="t" style="left:144.6px;top:1127.5px;font-size:13.4px;font-weight:bold;color:#262626;transform:scaleX(0.9196);transform-origin:0 0;">Tabelle1</div><div class="abs" style="left:0px;top:1148px;width:1695px;height:1px;background:#a9a9a9"></div><svg class="abs" style="left:0;top:1125px" width="130" height="23" viewBox="0 1125 130 23"><rect x="10" y="1130" width="2" height="12" fill="#8d8d8d"/><path d="M24 1134h-5v-3.500l-6.800 5.500 6.800 5.500v-3.500h5z" fill="#8d8d8d" /><rect x="34" y="1131" width="1.6" height="10" fill="#8d8d8d"/><path d="M40.500 1131v10l-5-5zM46 1131v10l-5-5z" fill="#8d8d8d" /><rect x="67.5" y="1131" width="1.6" height="10" fill="#8d8d8d"/><path d="M57 1131v10l5-5zM62.500 1131v10l5-5z" fill="#8d8d8d" /><rect x="91" y="1130" width="2" height="12" fill="#8d8d8d"/><path d="M79 1134h5v-3.500l6.800 5.500-6.800 5.500v-3.500h-5z" fill="#8d8d8d" /><path d="M111 1130h8v10.500h-6" fill="none" stroke="#2a2a2a" stroke-width="1.8" /><path d="M111 1130v7" fill="none" stroke="#2a2a2a" stroke-width="1.8" /><path d="M108 1140h5M110.500 1137.500v5" fill="none" stroke="#5e3519" stroke-width="1.3" /></svg>
<div class="t" style="left:38.6px;top:1153.5px;font-size:13.2px;color:#262626;transform:scaleX(0.9234);transform-origin:0 0;">Tabelle 1 von 1</div><div class="t" style="left:305.6px;top:1153.5px;font-size:13.2px;color:#262626;transform:scaleX(0.9253);transform-origin:0 0;">Ausgewählt: 6 Zeilen, 1 Spalte</div><div class="t" style="left:702.6px;top:1153.5px;font-size:13.2px;color:#262626;transform:scaleX(0.9333);transform-origin:0 0;">Standard</div><div class="t" style="left:1020.6px;top:1153.5px;font-size:13.2px;color:#262626;transform:scaleX(0.9459);transform-origin:0 0;">Deutsch (Deutschland)</div><div class="t" style="left:1506.6px;top:1153.5px;font-size:13.2px;color:#262626;transform:scaleX(0.9520);transform-origin:0 0;">Mittelwert: ; Summe: 0</div><svg class="abs" style="left:0;top:1149px" width="1695" height="23" viewBox="0 1149 1695 23"><rect x="10.5" y="1152.5" width="11" height="14" fill="#ececec" stroke="#9c9c9c" stroke-width="1"/><path d="M15 1155h2.500v4h2.500l-3.800 4-3.800-4h2.600z" fill="#8d8d8d" /><circle cx="20" cy="1163" r="4.3" fill="#e5402a" stroke="#b8642a" stroke-width="1.3"/><path d="M1319 1153.500h5M1319 1166.500h5M1321.500 1153.500v13" fill="none" stroke="#9a9a9a" stroke-width="1.2" /><path d="M1327.500 1163v3.500h11v-3.500" fill="none" stroke="#b4b4b4" stroke-width="1.2" /></svg>
<div class="dlg" style="left:416px;top:201px;width:829px;height:526px;"></div><div class="abs" style="left:758px;top:201.5px;width:143px;height:27.5px;background:#fff"></div><div class="t" style="left:764.6px;top:205.5px;font-size:13.4px;font-weight:bold;color:#2c2c2c;transform:scaleX(0.9548);transform-origin:0 0;">Suchen und Ersetzen</div><svg class="abs" style="left:1220.5px;top:208.5px" width="9" height="9" viewBox="0 0 9 9"><path d="M1 1l7 7M8 1l-7 7" stroke="#a3a3a3" stroke-width="2.2"/></svg><div class="t" style="left:440.8px;top:243.5px;font-size:13.4px;font-weight:bold;color:#2c2c2c;transform:scaleX(0.9629);transform-origin:0 0;">Suchen:</div><div class="entry" style="left:512px;top:241px;width:684px;height:30px;border-radius:3px 0 0 3px"></div><div class="btn" style="left:1195px;top:241px;width:31px;height:30px;border-radius:0 3px 3px 0"></div><div class="arr" style="left:1205px;top:253px"></div><div class="t" style="left:516.9px;top:248.5px;font-size:13.4px;color:#2a2a2a;transform:scaleX(1.0389);transform-origin:0 0;">(-betriebsmittel)</div><div class="cb " style="left:516px;top:280px"></div><div class="t" style="left:535.9px;top:280.5px;font-size:13.4px;color:#2a2a2a;transform:scaleX(1.0092);transform-origin:0 0;">Groß-/Kleinschreibung beachten</div><div class="cb " style="left:751px;top:280px"></div><div class="t" style="left:771.1px;top:280.5px;font-size:13.4px;color:#2a2a2a;transform:scaleX(1.0132);transform-origin:0 0;">Formatierte Anzeige</div><div class="cb dis" style="left:912px;top:280px"></div><div class="t" style="left:931.6px;top:280.5px;font-size:13.4px;color:#9b9b9b;transform:scaleX(0.9995);transform-origin:0 0;">Nur ganze Zellen</div><div class="cb " style="left:1054px;top:280px"></div><div class="t" style="left:1073.6px;top:280.5px;font-size:13.4px;color:#2a2a2a;transform:scaleX(1.0430);transform-origin:0 0;">Alle Tabellen</div><div class="t" style="left:440.8px;top:351.5px;font-size:13.4px;font-weight:bold;color:#2c2c2c;transform:scaleX(0.9897);transform-origin:0 0;">Ersetzen:</div><div class="entry" style="left:512px;top:349px;width:684px;height:30px;border-radius:3px 0 0 3px"></div><div class="btn" style="left:1195px;top:349px;width:31px;height:30px;border-radius:0 3px 3px 0"></div><div class="arr" style="left:1205px;top:361px"></div><svg class="abs" style="left:519px;top:355px" width="16" height="16" viewBox="519 355 16 16"><path d="M530.500 358.500v6.500h-7" fill="none" stroke="#2a2a2a" stroke-width="1.100"/><path d="M525 362.500l-3.500 2.500 3.500 2.500z" fill="#2a2a2a"/></svg><div class="t" style="left:533.9px;top:356.5px;font-size:13.4px;color:#2a2a2a;transform:scaleX(0.9862);transform-origin:0 0;">$1</div><div class="btn" style="left:438px;top:400px;width:148px;height:31px;"></div><div class="t" style="left:476.6px;top:408.5px;font-size:13.4px;color:#2a2a2a;transform:scaleX(1.0104);transform-origin:0 0;">Alle suchen</div><div class="btn" style="left:598px;top:400px;width:147px;height:31px;"></div><div class="t" style="left:615.1px;top:408.5px;font-size:13.4px;color:#2a2a2a;transform:scaleX(1.0067);transform-origin:0 0;">Vorherigen suchen</div><div class="btn" style="left:757px;top:400px;width:147px;height:31px;background:linear-gradient(#52bd82,#47b377);border-color:#2f6f8f #2f6f8f #2a5f86;box-shadow:none"></div><div class="t" style="left:778.6px;top:408.5px;font-size:13.4px;color:#fff;transform:scaleX(1.0044);transform-origin:0 0;">Nächsten suchen</div><div class="btn" style="left:917px;top:400px;width:146px;height:31px;"></div><div class="t" style="left:962.6px;top:408.5px;font-size:13.4px;color:#2a2a2a;transform:scaleX(0.9909);transform-origin:0 0;">Ersetzen</div><div class="btn" style="left:1076px;top:400px;width:145px;height:31px;"></div><div class="t" style="left:1108.6px;top:408.5px;font-size:13.4px;color:#2a2a2a;transform:scaleX(1.0121);transform-origin:0 0;">Alle ersetzen</div><svg class="abs" style="left:437px;top:453px" width="12" height="9" viewBox="0 0 12 9"><path d="M.5 .8h11l-5.500 7.200z" fill="#1e1e1e"/></svg><div class="t" style="left:451.1px;top:449.5px;font-size:13.4px;font-weight:bold;color:#2c2c2c;transform:scaleX(1.0326);transform-origin:0 0;">Weitere Optionen</div><div class="cb on" style="left:451px;top:474px"></div><svg class="abs" style="left:451px;top:474px" width="16" height="16" viewBox="0 0 16 16"><path d="M5.500 5.500l5 5M10.500 5.500l-5 5" stroke="#fff" stroke-width="2.500" stroke-linecap="round"/></svg><div class="t" style="left:471.0px;top:474.5px;font-size:13.4px;color:#2a2a2a;transform:scaleX(1.0338);transform-origin:0 0;">Nur in Auswahl</div><div class="cb dis" style="left:451px;top:502px"></div><div class="t" style="left:471.0px;top:502.5px;font-size:13.4px;color:#9b9b9b;transform:scaleX(1.0472);transform-origin:0 0;">Platzhalter</div><div class="cb on" style="left:451px;top:530px"></div><svg class="abs" style="left:451px;top:530px" width="16" height="16" viewBox="0 0 16 16"><path d="M5.500 5.500l5 5M10.500 5.500l-5 5" stroke="#fff" stroke-width="2.500" stroke-linecap="round"/></svg><div class="t" style="left:471.0px;top:530.5px;font-size:13.4px;color:#2a2a2a;transform:scaleX(1.0093);transform-origin:0 0;">Reguläre Ausdrücke</div><div class="cb dis" style="left:451px;top:563px"></div><div class="t" style="left:471.0px;top:563.5px;font-size:13.4px;color:#9b9b9b;transform:scaleX(1.0237);transform-origin:0 0;">Ähnlichkeitssuche</div><div class="btn" style="left:704px;top:555px;width:130px;height:31px;background:#d3d3d3;border-color:#b4b4b4;box-shadow:none"></div><div class="t" style="left:720.6px;top:563.5px;font-size:13.4px;color:#9b9b9b;transform:scaleX(1.0418);transform-origin:0 0;">Ähnlichkeiten…</div><div class="cb " style="left:451px;top:596px"></div><div class="t" style="left:471.0px;top:596.5px;font-size:13.4px;color:#2a2a2a;transform:scaleX(1.0131);transform-origin:0 0;">Diakritisch-sensitiv</div><div class="cb " style="left:850px;top:474px"></div><div class="t" style="left:869.8px;top:474.5px;font-size:13.4px;color:#2a2a2a;transform:scaleX(0.9876);transform-origin:0 0;">Rückwärts ersetzen</div><div class="cb " style="left:850px;top:502px"></div><div class="t" style="left:869.8px;top:502.5px;font-size:13.4px;color:#2a2a2a;transform:scaleX(1.0411);transform-origin:0 0;">Zellvorlagen</div><div class="t" style="left:450.6px;top:640.5px;font-size:13.4px;color:#2a2a2a;transform:scaleX(1.0334);transform-origin:0 0;">Richtung:</div><div class="rb" style="left:527px;top:640px;background:#9ab87c;border-color:#7d7d7d"></div><div class="abs" style="left:531.5px;top:644.5px;width:7px;height:7px;border-radius:50%;background:#fff"></div><div class="t" style="left:547.0px;top:640.5px;font-size:13.4px;color:#2a2a2a;transform:scaleX(0.9836);transform-origin:0 0;">Zeilen</div><div class="rb" style="left:606px;top:640px"></div><div class="t" style="left:625.9px;top:640.5px;font-size:13.4px;color:#2a2a2a;transform:scaleX(1.0055);transform-origin:0 0;">Spalten</div><div class="t" style="left:845.7px;top:640.5px;font-size:13.4px;color:#2a2a2a;transform:scaleX(0.9743);transform-origin:0 0;">Suchen in:</div><div class="btn" style="left:922px;top:633px;width:310px;height:30px"></div><div class="arr" style="left:1211px;top:645px"></div><div class="t" style="left:932.0px;top:640.5px;font-size:13.4px;color:#2a2a2a;transform:scaleX(1.0092);transform-origin:0 0;">Formeln</div><div class="btn" style="left:436px;top:676px;width:99px;height:31px;"></div><div class="t" style="left:471.0px;top:684.5px;font-size:13.4px;color:#2a2a2a;transform:scaleX(1.0669);transform-origin:0 0;">Hilfe</div><div class="btn" style="left:1126px;top:676px;width:100px;height:31px;"></div><div class="t" style="left:1147.0px;top:684.5px;font-size:13.4px;color:#2a2a2a;transform:scaleX(0.9700);transform-origin:0 0;">Schließen</div>
<div class="dlg" style="left:570px;top:705px;width:438px;height:443px;"></div><div class="abs" style="left:731px;top:706px;width:115px;height:27.5px;background:#fff"></div><div class="t" style="left:738.6px;top:709.5px;font-size:13.4px;font-weight:bold;color:#2c2c2c;transform:scaleX(0.9438);transform-origin:0 0;">Suchergebnisse</div><svg class="abs" style="left:983.5px;top:712.5px" width="9" height="9" viewBox="0 0 9 9"><path d="M1 1l7 7M8 1l-7 7" stroke="#a3a3a3" stroke-width="2.2"/></svg><div class="abs" style="left:582px;top:739px;width:413px;height:313px;background:#f5f5f5;border:1px solid #9c9c9c"></div><div class="abs" style="left:583px;top:740px;width:411px;height:27px;background:linear-gradient(#f4f4f4,#e4e5e3 70%,#dcdcdc);border-bottom:1px solid #a8a8a8"></div><div class="abs" style="left:662px;top:740px;width:1px;height:26px;background:#aaa"></div><div class="abs" style="left:742px;top:740px;width:1px;height:26px;background:#aaa"></div><div class="t" style="left:588.9px;top:745.5px;font-size:13.4px;color:#2a2a2a;transform:scaleX(1.0456);transform-origin:0 0;">Tabelle</div><div class="t" style="left:668.6px;top:745.5px;font-size:13.4px;color:#2a2a2a;transform:scaleX(1.0294);transform-origin:0 0;">Zelle</div><div class="t" style="left:748.6px;top:745.5px;font-size:13.4px;color:#2a2a2a;transform:scaleX(1.1196);transform-origin:0 0;">Inhalt</div><div class="t" style="left:586.6px;top:778.5px;font-size:13.4px;color:#2a2a2a;transform:scaleX(1.0277);transform-origin:0 0;">Tabelle1</div><div class="t" style="left:666.8px;top:778.5px;font-size:13.4px;color:#2a2a2a;transform:scaleX(1.0480);transform-origin:0 0;">$B$1</div><div class="t" style="left:746.8px;top:770.5px;font-size:13.4px;color:#2a2a2a;transform:scaleX(1.0583);transform-origin:0 0;">=anlage+ort</div><div class="t" style="left:746.8px;top:786.5px;font-size:13.4px;color:#2a2a2a;transform:scaleX(1.0505);transform-origin:0 0;">-betriebsmittel</div><div class="t" style="left:586.6px;top:816.5px;font-size:13.4px;color:#2a2a2a;transform:scaleX(1.0277);transform-origin:0 0;">Tabelle1</div><div class="t" style="left:666.8px;top:816.5px;font-size:13.4px;color:#2a2a2a;transform:scaleX(1.0480);transform-origin:0 0;">$B$2</div><div class="t" style="left:746.8px;top:808.5px;font-size:13.4px;color:#2a2a2a;transform:scaleX(1.0583);transform-origin:0 0;">=anlage+ort</div><div class="t" style="left:746.8px;top:824.5px;font-size:13.4px;color:#2a2a2a;transform:scaleX(1.0505);transform-origin:0 0;">-betriebsmittel</div><div class="t" style="left:586.6px;top:854.5px;font-size:13.4px;color:#2a2a2a;transform:scaleX(1.0277);transform-origin:0 0;">Tabelle1</div><div class="t" style="left:666.8px;top:854.5px;font-size:13.4px;color:#2a2a2a;transform:scaleX(1.0480);transform-origin:0 0;">$B$3</div><div class="t" style="left:746.8px;top:846.5px;font-size:13.4px;color:#2a2a2a;transform:scaleX(1.0583);transform-origin:0 0;">=anlage+ort</div><div class="t" style="left:746.8px;top:862.5px;font-size:13.4px;color:#2a2a2a;transform:scaleX(1.0505);transform-origin:0 0;">-betriebsmittel</div><div class="t" style="left:586.6px;top:892.5px;font-size:13.4px;color:#2a2a2a;transform:scaleX(1.0277);transform-origin:0 0;">Tabelle1</div><div class="t" style="left:666.8px;top:892.5px;font-size:13.4px;color:#2a2a2a;transform:scaleX(1.0480);transform-origin:0 0;">$B$4</div><div class="t" style="left:746.8px;top:884.5px;font-size:13.4px;color:#2a2a2a;transform:scaleX(1.0583);transform-origin:0 0;">=anlage+ort</div><div class="t" style="left:746.8px;top:900.5px;font-size:13.4px;color:#2a2a2a;transform:scaleX(1.0505);transform-origin:0 0;">-betriebsmittel</div><div class="t" style="left:586.6px;top:930.5px;font-size:13.4px;color:#2a2a2a;transform:scaleX(1.0277);transform-origin:0 0;">Tabelle1</div><div class="t" style="left:666.8px;top:930.5px;font-size:13.4px;color:#2a2a2a;transform:scaleX(1.0480);transform-origin:0 0;">$B$5</div><div class="t" style="left:746.8px;top:922.5px;font-size:13.4px;color:#2a2a2a;transform:scaleX(1.0583);transform-origin:0 0;">=anlage+ort</div><div class="t" style="left:746.8px;top:938.5px;font-size:13.4px;color:#2a2a2a;transform:scaleX(1.0505);transform-origin:0 0;">-betriebsmittel</div><div class="t" style="left:586.6px;top:968.5px;font-size:13.4px;color:#2a2a2a;transform:scaleX(1.0277);transform-origin:0 0;">Tabelle1</div><div class="t" style="left:666.8px;top:968.5px;font-size:13.4px;color:#2a2a2a;transform:scaleX(1.0480);transform-origin:0 0;">$B$6</div><div class="t" style="left:746.8px;top:960.5px;font-size:13.4px;color:#2a2a2a;transform:scaleX(1.0583);transform-origin:0 0;">=anlage+ort</div><div class="t" style="left:746.8px;top:976.5px;font-size:13.4px;color:#2a2a2a;transform:scaleX(1.0505);transform-origin:0 0;">-betriebsmittel</div><div class="t" style="left:581.9px;top:1063.5px;font-size:13.4px;color:#2a2a2a;transform:scaleX(1.0063);transform-origin:0 0;">6 Ergebnisse gefunden</div><div class="cb on" style="left:592px;top:1106px"></div><svg class="abs" style="left:592px;top:1106px" width="16" height="16" viewBox="0 0 16 16"><path d="M5.500 5.500l5 5M10.500 5.500l-5 5" stroke="#fff" stroke-width="2.500" stroke-linecap="round"/></svg><div class="t" style="left:612.0px;top:1106.5px;font-size:13.4px;color:#2a2a2a;transform:scaleX(0.9933);transform-origin:0 0;">Diesen Dialog anzeigen</div><div class="btn" style="left:812px;top:1098px;width:177px;height:31px;"></div><div class="t" style="left:870.9px;top:1106.5px;font-size:13.4px;color:#2a2a2a;transform:scaleX(0.9717);transform-origin:0 0;">Schließen</div>
<svg class="abs" style="left:0;top:0" width="1695" height="1172" viewBox="0 0 1695 1172" fill="none" stroke="#ff0000"><rect x="429" y="230" width="220" height="156" stroke-width="4"/><rect x="436" y="398.500" width="152" height="34" stroke-width="4"/><rect x="1073" y="397" width="150" height="36" stroke-width="4"/><rect x="442.200" y="525.200" width="157" height="27" stroke-width="4"/><path d="M572.500 480.500L1225 450.800" stroke-width="3.600"/><path d="M1226 437v29l27-14.500z" stroke-width="4.500" fill="#fdfdfd" stroke-linejoin="miter"/></svg>
</body>
</html>
